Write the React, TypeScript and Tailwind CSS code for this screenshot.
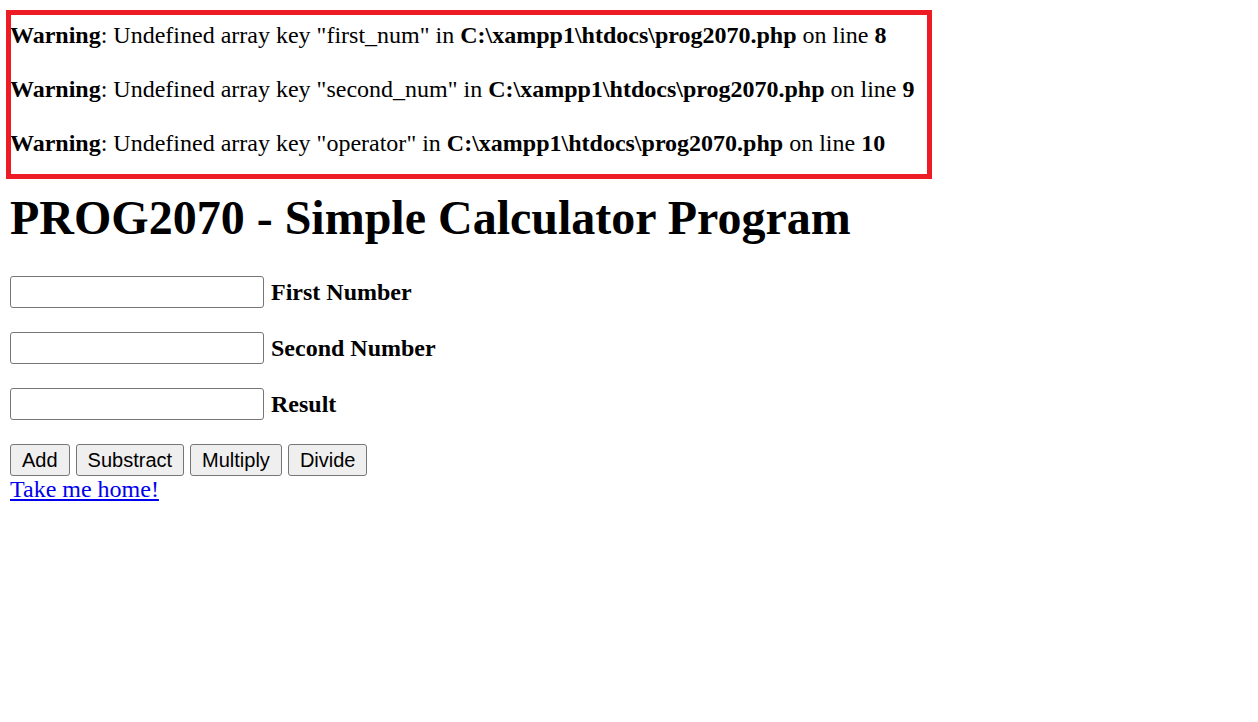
const warnings = [
  { key: 'first_num', line: 8 },
  { key: 'second_num', line: 9 },
  { key: 'operator', line: 10 },
];

const fields = ['First Number', 'Second Number', 'Result'];
const buttons = ['Add', 'Substract', 'Multiply', 'Divide'];

const App = () => (
  <div className="relative min-h-[722px] bg-white px-[10px] pt-[22px] text-[24px] leading-[27px] text-black [font-family:'Liberation_Serif',serif]">
    <div className="flex flex-col gap-[27px]">
      {warnings.map((w) => (
        <div key={w.key} className="h-[27px] whitespace-nowrap">
          <b>Warning</b>: Undefined array key "{w.key}" in <b>C:\xampp1\htdocs\prog2070.php</b> on line{' '}
          <b>{w.line}</b>
        </div>
      ))}
    </div>

    <h1 className="mt-[34px] mb-[32px] text-[48px] leading-[53px] font-bold whitespace-nowrap">
      PROG2070 - Simple Calculator Program
    </h1>

    <form className="flex flex-col gap-[24px]">
      {fields.map((f) => (
        <div key={f} className="flex items-center gap-[7px]">
          <input
            type="text"
            className="h-[32px] w-[254px] rounded-[3px] border-[1.5px] border-[#767676] bg-white"
          />
          <b>{f}</b>
        </div>
      ))}
      <div className="flex gap-[6px]">
        {buttons.map((b) => (
          <button
            key={b}
            type="button"
            className="h-[32px] rounded-[3px] border-[1.5px] border-[#767676] bg-[#efefef] px-[11px] text-[20px] leading-[23px] text-black [font-family:'Liberation_Sans',Arial,sans-serif]"
          >
            {b}
          </button>
        ))}
      </div>
    </form>
    <a href="#" className="text-[#0000ee] underline">
      Take me home!
    </a>

    <div className="pointer-events-none absolute top-[10px] left-[6px] h-[169px] w-[926px] border-[5px] border-[#ed1c24]" />
  </div>
);

export default App;
